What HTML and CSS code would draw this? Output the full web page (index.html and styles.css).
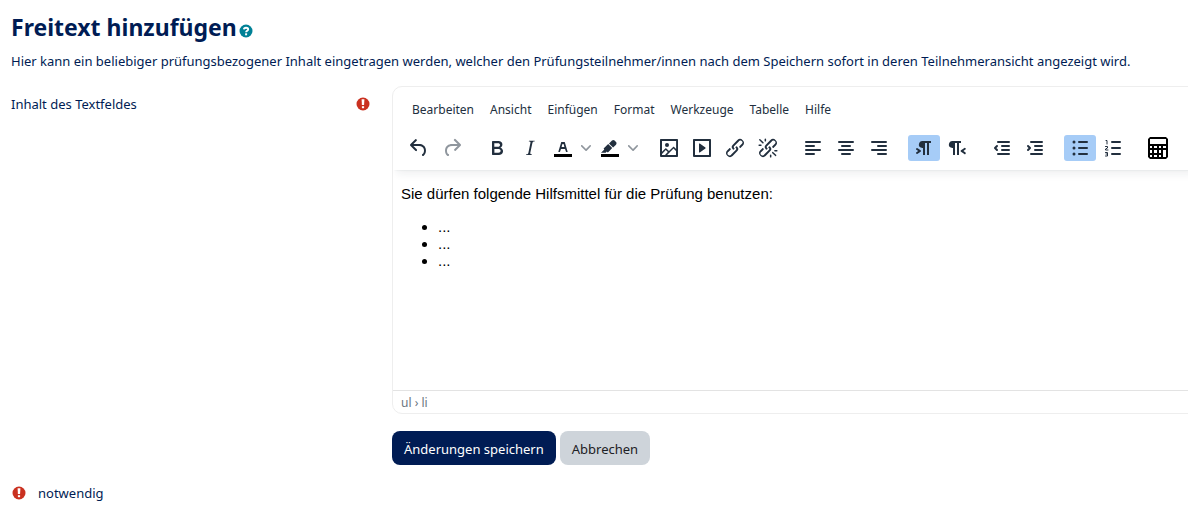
FILE: index.html
```html
<!DOCTYPE html>
<html lang="de">
<head>
<meta charset="utf-8">
<title>Freitext hinzufügen</title>
<link rel="stylesheet" href="styles.css">
</head>
<body>
<svg class="sprite" aria-hidden="true">
  <symbol id="required" viewBox="0 0 14 14"><circle cx="7" cy="7" r="6.5" fill="#ca3120"/><path d="M5.600 2.200h2.800L8.100 8H5.900z" fill="#fff"/><path d="M5.900 9.200h2.200v2H5.900z" fill="#fff"/></symbol>
</svg>
<main class="page">
  <header class="heading">
    <h1 class="title">Freitext hinzufügen</h1>
    <button class="help" type="button" aria-label="Hilfe"><svg viewBox="0 0 14 14"><circle cx="7" cy="7" r="6.5" fill="#008196"/><path d="M4.900 5.400C5 3.200 9.200 3.200 9.200 5.300 9.200 6.800 7.100 6.700 7.100 8.300" fill="none" stroke="#fff" stroke-width="1.900"/><path d="M6.100 9.300h2v2h-2z" fill="#fff"/></svg></button>
  </header>
  <p class="intro">Hier kann ein beliebiger prüfungsbezogener Inhalt eingetragen werden, welcher den Prüfungsteilnehmer/innen nach dem Speichern sofort in deren Teilnehmeransicht angezeigt wird.</p>
  <form class="form">
    <div class="label-cell">
      <span id="field-label">Inhalt des Textfeldes</span>
      <svg class="required" role="img" aria-label="Notwendig"><use href="#required"/></svg>
    </div>
    <div class="field">
      <section class="editor" aria-labelledby="field-label">
        <div class="editor-head">
          <div class="menubar" role="menubar">
            <button type="button">Bearbeiten</button><button type="button">Ansicht</button><button type="button">Einfügen</button><button type="button">Format</button><button type="button">Werkzeuge</button><button type="button">Tabelle</button><button type="button">Hilfe</button>
          </div>
          <div class="toolbar" role="toolbar">
            <div class="group">
              <button type="button" aria-label="Rückgängig"><svg viewBox="0 0 24 24"><path d="M6.400 8H12c3.700 0 6.200 2 6.800 5.100.6 2.700-.4 5.600-2.300 6.800a1 1 0 0 1-1-1.800c1.100-.6 1.800-2.700 1.400-4.600-.5-2.100-2.100-3.500-4.900-3.500H6.400l3.300 3.300a1 1 0 1 1-1.400 1.400l-5-5a1 1 0 0 1 0-1.400l5-5a1 1 0 0 1 1.400 1.400L6.400 8Z"/></svg></button>
              <button type="button" disabled aria-label="Wiederholen"><svg viewBox="0 0 24 24"><path d="M17.600 10H12c-2.800 0-4.400 1.400-4.900 3.500-.4 2 .3 4 1.400 4.600a1 1 0 1 1-1 1.800c-2-1.200-2.900-4.100-2.300-6.800.6-3 3-5.100 6.800-5.100h5.600l-3.300-3.300a1 1 0 1 1 1.400-1.400l5 5a1 1 0 0 1 0 1.400l-5 5a1 1 0 0 1-1.400-1.400l3.300-3.300Z"/></svg></button>
            </div>
            <div class="group">
              <button type="button" aria-label="Fett"><svg viewBox="0 0 24 24"><path fill-rule="evenodd" d="M7.800 19c-.3 0-.5 0-.6-.2l-.2-.5V5.700c0-.2 0-.4.2-.5l.6-.2h5c1.500 0 2.700.3 3.500 1 .7.6 1.100 1.400 1.100 2.500a3 3 0 0 1-.6 1.900c-.4.6-1 1-1.600 1.200.4.1.9.3 1.300.6s.8.7 1 1.200c.4.4.5 1 .5 1.600 0 1.300-.4 2.300-1.300 3-.8.7-2.100 1-3.800 1H7.800Zm5-8.300c.6 0 1.200-.1 1.600-.5.4-.3.6-.7.6-1.300 0-1.100-.8-1.700-2.300-1.700H9.300v3.500h3.400Zm.5 6c.7 0 1.300-.1 1.700-.4.4-.4.6-.9.6-1.500s-.2-1-.7-1.400c-.4-.3-1-.4-2-.4H9.400v3.800h4Z"/></svg></button>
              <button type="button" aria-label="Kursiv"><svg viewBox="0 0 24 24"><path d="m16.700 4.700-.1.900h-.3c-.6 0-1 0-1.400.3-.3.3-.4.6-.5 1.100l-2.100 9.800v.6c0 .5.4.8 1.400.8h.2l-.2.8H8l.2-.8h.2c1.100 0 1.800-.5 2-1.500l2-9.800.1-.5c0-.6-.4-.8-1.400-.8h-.3l.2-.9h5.800Z"/></svg></button>
              <div class="split"><button type="button" aria-label="Textfarbe"><svg viewBox="0 0 24 24"><path d="M3 18h18v3H3z" fill="#000"/><path fill-rule="evenodd" d="M8.700 16h-.8a.5.5 0 0 1-.5-.6l2.700-9c.1-.3.3-.4.5-.4h2.800c.2 0 .4.1.5.4l2.700 9a.5.5 0 0 1-.5.6h-.8a.5.5 0 0 1-.4-.4l-.7-2.200c0-.3-.3-.4-.5-.4h-3.400c-.2 0-.4.1-.5.4l-.7 2.200c0 .3-.2.4-.4.4Zm2.600-7.600-.6 2a.5.5 0 0 0 .5.600h1.600a.5.5 0 0 0 .5-.6l-.6-2c0-.3-.3-.4-.5-.4h-.4c-.2 0-.4.1-.5.4Z"/></svg></button><button class="arrow" type="button" aria-label="Textfarbe wählen"><svg viewBox="0 0 10 10"><path d="M8.700 2.200c.3-.3.8-.3 1 0 .4.4.4.9 0 1.200L5.700 7.800c-.3.3-.9.3-1.200 0L.2 3.400a.8.8 0 0 1 0-1.200c.3-.3.8-.3 1.100 0L5 6l3.700-3.800Z"/></svg></button></div>
              <div class="split"><button type="button" aria-label="Hintergrundfarbe"><svg viewBox="0 0 24 24"><path d="M3 18h18v3H3z" fill="#000"/><path d="M7.700 16.700H3l3.300-3.300-.7-.8L10.200 8l4 4.100-4 4.200c-.2.2-.6.2-.8 0l-.6-.7-1.100 1.100zm5-7.500L11 7.400l3-2.900a2 2 0 0 1 2.600 0L18 6c.7.7.7 2 0 2.700l-2.900 2.900-1.800-1.800-.5-.6"/></svg></button><button class="arrow" type="button" aria-label="Hintergrundfarbe wählen"><svg viewBox="0 0 10 10"><path d="M8.700 2.200c.3-.3.8-.3 1 0 .4.4.4.9 0 1.200L5.700 7.800c-.3.3-.9.3-1.200 0L.2 3.400a.8.8 0 0 1 0-1.200c.3-.3.8-.3 1.100 0L5 6l3.700-3.800Z"/></svg></button></div>
            </div>
            <div class="group">
              <button type="button" aria-label="Bild"><svg viewBox="0 0 24 24"><path fill-rule="evenodd" d="m5 15.700 3.300-3.200c.3-.3.7-.3 1 0L12 15l4.100-4c.3-.4.8-.4 1 0l2 1.900V5H5v10.700ZM5 18V19h3l2.800-2.900-2-2L5 17.900Zm14-3-2.500-2.400-6.400 6.500H19v-4ZM4 3h16c.6 0 1 .4 1 1v16c0 .6-.4 1-1 1H4a1 1 0 0 1-1-1V4c0-.6.4-1 1-1Z"/><circle cx="10" cy="9" r="2"/></svg></button>
              <button type="button" aria-label="Medien"><svg viewBox="0 0 24 24"><path fill-rule="evenodd" d="M4 3h16c.6 0 1 .4 1 1v16c0 .6-.4 1-1 1H4a1 1 0 0 1-1-1V4c0-.6.4-1 1-1Zm1 2v14h14V5H5Zm4.800 2.600 5.600 4a.5.5 0 0 1 0 .8l-5.600 4A.5.5 0 0 1 9 16V8a.5.5 0 0 1 .8-.4Z"/></svg></button>
              <button type="button" aria-label="Link"><svg viewBox="0 0 24 24"><path id="chain" d="M6.200 12.300a1 1 0 0 1 1.400 1.400l-2 2a2 2 0 1 0 2.600 2.800l4.800-4.800a1 1 0 0 0 0-1.400 1 1 0 1 1 1.400-1.300 2.900 2.900 0 0 1 0 4L9.600 20a3.900 3.900 0 0 1-5.500-5.500l2-2Zm11.600-.6a1 1 0 0 1-1.400-1.400l2-2a2 2 0 1 0-2.600-2.800L11 10.300a1 1 0 0 0 0 1.400A1 1 0 1 1 9.600 13a2.900 2.900 0 0 1 0-4L14.400 4a3.900 3.900 0 0 1 5.500 5.500l-2 2Z"/></svg></button>
              <button type="button" aria-label="Link entfernen"><svg viewBox="0 0 24 24"><use href="#chain"/><path d="M7.600 6.300a.8.8 0 0 1-1 1.100L3.300 4.200a.7.7 0 1 1 1-1l3.200 3.100ZM5.100 8.600a.8.8 0 0 1 0 1.500H3a.8.8 0 0 1 0-1.500H5Zm5-3.500a.8.8 0 0 1-1.500 0V3a.8.8 0 0 1 1.500 0V5Zm6 11.800a.8.8 0 0 1 1-1l3.200 3.200a.8.8 0 0 1-1 1L16 17Zm-2.200 2a.8.8 0 0 1 1.500 0V21a.8.8 0 0 1-1.500 0V19Zm5-3.500a.7.7 0 1 1 0-1.500H21a.8.8 0 0 1 0 1.500H19Z"/></svg></button>
            </div>
            <div class="group">
              <button type="button" aria-label="Linksbündig"><svg class="lines" viewBox="0 0 24 24"><path d="M5 6h14M5 10h8M5 14h14M5 18h8"/></svg></button>
              <button type="button" aria-label="Zentriert"><svg class="lines" viewBox="0 0 24 24"><path d="M5 6h14M8 10h8M5 14h14M8 18h8"/></svg></button>
              <button type="button" aria-label="Rechtsbündig"><svg class="lines" viewBox="0 0 24 24"><path d="M5 6h14M11 10h8M5 14h14M11 18h8"/></svg></button>
            </div>
            <div class="group">
              <button type="button" class="active" aria-pressed="true" aria-label="Links nach rechts"><svg viewBox="0 0 24 24"><path d="M11 5h8v2h-2v12h-2V7h-2v12h-2v-7c-.5 0-1 0-1.400-.3A3.400 3.400 0 0 1 11 5ZM4.400 16.200 6.200 15l-1.800-1.200a1 1 0 0 1 1.200-1.600l3 2a1 1 0 0 1 0 1.600l-3 2a1 1 0 1 1-1.200-1.600Z"/></svg></button>
              <button type="button" aria-label="Rechts nach links"><svg viewBox="0 0 24 24"><path d="M8 5h8v2h-2v12h-2V7h-2v12H8v-7c-.5 0-1 0-1.400-.3A3.400 3.400 0 0 1 8 5Zm12 11.200a1 1 0 1 1-1 1.600l-3-2a1 1 0 0 1 0-1.600l3-2a1 1 0 1 1 1 1.600L18.400 15l1.800 1.200Z"/></svg></button>
            </div>
            <div class="group">
              <button type="button" aria-label="Einzug verkleinern"><svg class="lines" viewBox="0 0 24 24"><path d="M8 6h11M12 10h7M12 14h7M8 18h11M7 10l-2 2 2 2"/></svg></button>
              <button type="button" aria-label="Einzug vergrößern"><svg class="lines" viewBox="0 0 24 24"><path d="M8 6h11M12 10h7M12 14h7M8 18h11M5 10l2 2-2 2"/></svg></button>
            </div>
            <div class="group">
              <button type="button" class="active" aria-pressed="true" aria-label="Aufzählung"><svg class="lines" viewBox="0 0 24 24"><path d="M11 6h8M11 12h8M11 18h8"/><path class="dots" d="M6 6h.01M6 12h.01M6 18h.01"/></svg></button>
              <button type="button" aria-label="Nummerierte Liste"><svg class="lines" viewBox="0 0 24 24"><path d="M11 6h8M11 12h8M11 18h8"/><path class="thin" d="M5 4.500h1V8M4.500 10.500h2v1.500l-2 1v1h2.500M4.500 16.500h2v3.500h-2M5 18h1.500"/></svg></button>
            </div>
            <div class="group">
              <button type="button" aria-label="Rechner"><svg class="calc" viewBox="0 0 20 22"><path fill="#000" fill-rule="evenodd" d="M2 0h16l2 2v18l-2 2H2l-2-2V2zM2 2v5h16V2zM2 9v2h2V9zm4 0v2h3V9zm5 0v2h2V9zm4 0v2h3V9zM2 13v3h2v-3zm4 0v3h3v-3zm5 0v3h2v-3zM2 18v2h2v-2zm4 0v2h3v-2zm5 0v2h2v-2zm4-5v7h3v-7z"/></svg></button>
            </div>
          </div>
        </div>
        <div class="content" contenteditable="true" role="textbox" aria-multiline="true" aria-labelledby="field-label">
          <p>Sie dürfen folgende Hilfsmittel für die Prüfung benutzen:</p>
          <ul><li>...</li><li>...</li><li>...</li></ul>
        </div>
        <footer class="statusbar">ul › li</footer>
      </section>
      <div class="actions">
        <button class="btn primary" type="submit">Änderungen speichern</button>
        <button class="btn secondary" type="button">Abbrechen</button>
      </div>
    </div>
  </form>
  <div class="legend"><svg class="required" aria-hidden="true"><use href="#required"/></svg><span>notwendig</span></div>
</main>
</body>
</html>
```
FILE: styles.css
```css
* { box-sizing: border-box; }
body { margin: 0; background: #fff; color: #001c54; font: 13px/20px "Noto Sans", "Open Sans", sans-serif; overflow: hidden; }
button { font: inherit; color: inherit; border: 0; padding: 0; background: none; }
.sprite { position: absolute; width: 0; height: 0; }
.page { padding: 11px 0 0 11px; }
.heading { display: flex; align-items: center; gap: 2px; height: 32px; }
.title { margin: 0; font-size: 23px; line-height: 32px; font-weight: 700; }
.help { width: 14px; height: 14px; margin-top: 8px; }
.help svg { display: block; width: 14px; height: 14px; }
.intro { margin: 8px 0 15px; white-space: nowrap; }
.form { display: grid; grid-template-columns: 359px minmax(0, 1fr); column-gap: 22px; }
.label-cell { display: flex; justify-content: space-between; align-items: flex-start; padding-top: 8px; }
.required { width: 14px; height: 14px; margin: 3px 0; flex: none; }
.editor { margin-right: -12px; border: 1px solid #eee; border-radius: 10px; overflow: hidden; color: #222f3e; }
.editor-head { position: relative; box-shadow: 0 2px 2px -2px rgba(34,47,62,.1), 0 8px 8px -4px rgba(34,47,62,.07); padding-bottom: 4px; }
.menubar { display: flex; padding: 9px 11px 0; font-size: 12px; }
.menubar button { padding: 0 8px; height: 28px; }
.toolbar { display: flex; gap: 13px; padding: 11px 10px 0; height: 42px; }
.group { display: flex; gap: 1px; }
.group button { width: 32px; height: 26px; display: grid; place-items: center; border-radius: 3px; }
.toolbar svg { width: 24px; height: 24px; fill: #222f3e; display: block; }
.toolbar button:disabled svg { opacity: .5; }
.split { display: flex; }
.group .arrow { width: 14px; }
.toolbar .arrow svg { width: 10px; height: 10px; opacity: .5; }
.toolbar svg.lines { fill: none; stroke: #222f3e; stroke-width: 2; stroke-linecap: round; stroke-linejoin: round; }
.thin { stroke-width: 1; }
.dots { stroke-width: 3; }
.toolbar svg.calc { width: 20px; height: 22px; }
.group .active { background: #a6ccf7; }
.content { min-height: 220px; padding: 15px 8px; color: #000; font: 15px/17px "Liberation Sans", Arial, sans-serif; outline: 0; }
.content p { margin: 0 0 16px; }
.content ul { margin: 0; padding-left: 37px; }
.statusbar { border-top: 1px solid #e3e3e3; padding: 2px 8px; height: 23px; font-size: 12px; color: #6b7480; }
.actions { display: flex; gap: 4px; margin-top: 17px; }
.btn { height: 34px; padding: 2px 12px 0; border-radius: 8px; }
.primary { background: #001c54; color: #fff; }
.secondary { background: #ced4da; color: #1d2125; }
.legend { display: flex; gap: 12px; margin-top: 18px; padding-left: 1px; }
```
